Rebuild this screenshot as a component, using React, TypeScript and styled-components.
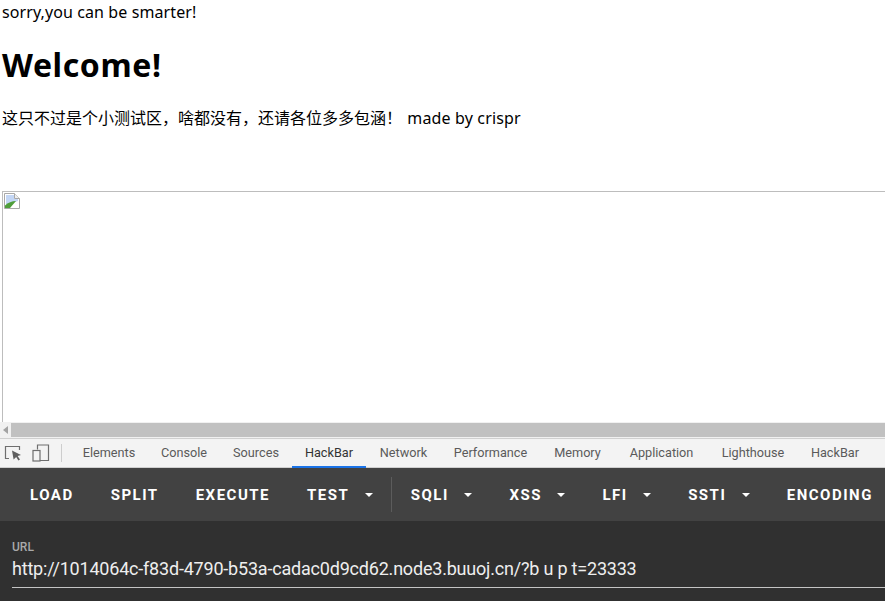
import styled, { createGlobalStyle } from "styled-components";

const GlobalStyle = createGlobalStyle`
html, body {
  margin: 0;
  padding: 0;
  background: #fff;
  overflow: hidden;
}
`;

const Screen = styled.div`
  display: flex;
  flex-direction: column;
  width: 885px;
  height: 601px;
  overflow: hidden;
`;

const Page = styled.div`
  height: 422px;
  padding-left: 2px;
  overflow: hidden;
  font-family: "Noto Sans", "Noto Sans CJK SC", sans-serif;
  color: #000;
  font-size: 16px;
`;

const Sorry = styled.div`
  line-height: 24px;
  letter-spacing: 0.1px;
`;

const Heading = styled.h1`
  margin: 18px 0 0;
  font-size: 32px;
  line-height: 46px;
  font-weight: 700;
  letter-spacing: 0.6px;
`;

const Intro = styled.p`
  margin: 19px 0 0;
  line-height: 23px;
  white-space: pre;
`;

const Credit = styled.span`
  margin-left: -3px;
  letter-spacing: 0.15px;
`;

const Frame = styled.div`
  box-sizing: border-box;
  width: 1000px;
  height: 300px;
  margin-top: 61px;
  padding: 1px 1px;
  border: 1px solid #bdbdbd;
`;

const Scrollbar = styled.div`
  display: flex;
  height: 16px;
  background: #f1f1f1;
`;

const ScrollArrow = styled.div`
  display: flex;
  align-items: center;
  justify-content: center;
  width: 11px;
`;

const ScrollThumb = styled.div`
  flex: 1;
  margin: 1px 0;
  background: #c1c1c1;
`;

const TabBar = styled.div`
  display: flex;
  align-items: stretch;
  box-sizing: border-box;
  height: 30px;
  background: #f3f3f3;
  border-top: 1px solid #d0d0d0;
  border-bottom: 1px solid #cfcfcf;
  font-family: Roboto, sans-serif;
  font-size: 12.7px;
`;

const TabTools = styled.div`
  display: flex;
  align-items: center;
  gap: 10px;
  width: 70px;
  padding-left: 4px;
  box-sizing: border-box;
  flex-shrink: 0;
`;

const TabDivider = styled.div`
  width: 1px;
  height: 18px;
  background: #cdcdcd;
  margin-left: 1px;
`;

const Tab = styled.div<{ $active?: boolean; $width: number }>`
  display: flex;
  align-items: center;
  justify-content: center;
  flex-shrink: 0;
  width: ${(props) => props.$width}px;
  color: ${(props) => (props.$active ? "#333" : "#5a5a5a")};
  margin-bottom: -1px;
  border-bottom: 2px solid ${(props) => (props.$active ? "#1a73e8" : "transparent")};
  white-space: nowrap;
  box-sizing: border-box;
  height: 29px;
`;

const Toolbar = styled.div`
  display: flex;
  align-items: center;
  height: 53px;
  padding-left: 11.5px;
  background: #424242;
  font-family: Roboto, sans-serif;
  white-space: nowrap;
`;

const ToolButton = styled.div`
  display: flex;
  align-items: center;
  flex-shrink: 0;
  padding: 0 18.5px;
  color: #fff;
  font-size: 15px;
  font-weight: 700;
  letter-spacing: 1.5px;
`;

const Caret = styled.span`
  width: 0;
  height: 0;
  margin-left: 15.5px;
  border-left: 4px solid transparent;
  border-right: 4px solid transparent;
  border-top: 4px solid #fff;
`;

const ToolDivider = styled.div`
  flex-shrink: 0;
  width: 1px;
  height: 35px;
  background: #5c5c5c;
`;

const UrlPanel = styled.div`
  flex: 1;
  padding: 19px 0 0 12px;
  background: #303030;
  font-family: Roboto, sans-serif;
`;

const UrlLabel = styled.div`
  color: #a9a9a9;
  font-size: 12px;
  font-weight: 500;
  line-height: 14px;
`;

const UrlValue = styled.div`
  box-sizing: border-box;
  height: 34px;
  padding-top: 4px;
  border-bottom: 1px solid #c4c4c4;
  color: #eeeeee;
  font-size: 18px;
  line-height: 22px;
  letter-spacing: -0.2px;
  white-space: pre;
`;

const toolsLeft = [
  { label: "LOAD" },
  { label: "SPLIT" },
  { label: "EXECUTE" },
  { label: "TEST", menu: true },
];

const toolsRight = [
  { label: "SQLI", menu: true },
  { label: "XSS", menu: true },
  { label: "LFI", menu: true },
  { label: "SSTI", menu: true },
  { label: "ENCODING" },
];

const tabs = [
  { label: "Elements", width: 78 },
  { label: "Console", width: 72 },
  { label: "Sources", width: 72 },
  { label: "HackBar", width: 74, active: true },
  { label: "Network", width: 75 },
  { label: "Performance", width: 99 },
  { label: "Memory", width: 75 },
  { label: "Application", width: 93 },
  { label: "Lighthouse", width: 90 },
  { label: "HackBar", width: 74 },
];

function BrokenImage() {
  return (
    <svg width="16" height="16" viewBox="0 0 16 16" style={{ display: "block" }}>
      <path d="M0.5 0.5H10.5L15.5 5.5V15.5H0.5Z" fill="#fff" stroke="#a8a8a8" />
      <path d="M2 2H10V6H14V8L2 12Z" fill="#c3d6f5" />
      <path d="M1 15V12.5C4 9.5 8 8 12 8L6 15Z" fill="#4f9e3a" />
      <path d="M10.5 0.5V5.5H15.5" fill="#eee" stroke="#a8a8a8" />
      <path d="M11 15L15 11V15Z" fill="#fff" />
    </svg>
  );
}

function InspectIcon() {
  return (
    <svg width="18" height="16" viewBox="0 0 18 16" fill="none">
      <path d="M5 13.5H1.5V1.5H15.5V5" stroke="#6e6e6e" strokeWidth="1.2" />
      <path d="M8 5.5L17 10L13.6 11L16 14.6L14.4 15.6L12.2 12L9.6 14.4Z" fill="#5f5f5f" />
    </svg>
  );
}

function DeviceIcon() {
  return (
    <svg width="18" height="18" viewBox="0 0 18 18" fill="none">
      <path d="M5.5 5.5V1H16.5V16.5H8" stroke="#6e6e6e" strokeWidth="1.2" />
      <rect x="1" y="6.5" width="7" height="10.5" stroke="#6e6e6e" strokeWidth="1.2" />
    </svg>
  );
}

export default function App() {
  return (
    <Screen>
      <GlobalStyle />
      <Page>
        <Sorry>sorry,you can be smarter!</Sorry>
        <Heading>Welcome!</Heading>
        <Intro>
          这只不过是个小测试区，啥都没有，还请各位多多包涵！  <Credit>made by crispr</Credit>
        </Intro>
        <Frame>
          <BrokenImage />
        </Frame>
      </Page>
      <Scrollbar>
        <ScrollArrow>
          <svg width="5" height="8" viewBox="0 0 5 8">
            <path d="M5 0V8L0 4Z" fill="#a3a3a3" />
          </svg>
        </ScrollArrow>
        <ScrollThumb />
      </Scrollbar>
      <TabBar>
        <TabTools>
          <InspectIcon />
          <DeviceIcon />
          <TabDivider />
        </TabTools>
        {tabs.map((tab, i) => (
          <Tab key={i} $active={tab.active} $width={tab.width}>
            {tab.label}
          </Tab>
        ))}
      </TabBar>
      <Toolbar>
        {toolsLeft.map((tool) => (
          <ToolButton key={tool.label}>
            {tool.label}
            {tool.menu && <Caret />}
          </ToolButton>
        ))}
        <ToolDivider />
        {toolsRight.map((tool) => (
          <ToolButton key={tool.label}>
            {tool.label}
            {tool.menu && <Caret />}
          </ToolButton>
        ))}
      </Toolbar>
      <UrlPanel>
        <UrlLabel>URL</UrlLabel>
        <UrlValue>http://1014064c-f83d-4790-b53a-cadac0d9cd62.node3.buuoj.cn/?b u p t=23333</UrlValue>
      </UrlPanel>
    </Screen>
  );
}
